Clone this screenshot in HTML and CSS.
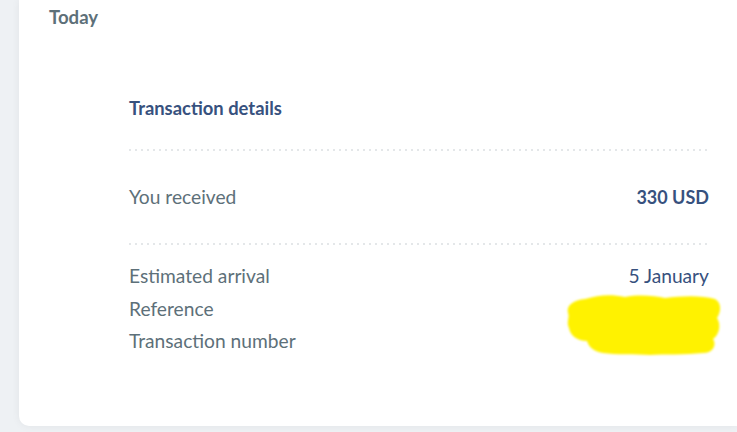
FILE: index.html
```html
<!DOCTYPE html>
<html lang="en">
<head>
<meta charset="utf-8">
<link rel="stylesheet" href="styles.css">
</head>
<body>
<div class="card">
  <div class="day">Today</div>
  <div class="details">
    <h2 class="title">Transaction details</h2>
    <div class="divider"></div>
    <div class="row row-main">
      <span class="label">You received</span>
      <span class="amount">330 USD</span>
    </div>
    <div class="divider"></div>
    <div class="list">
      <div class="row"><span class="label">Estimated arrival</span><span class="value">5 January</span></div>
      <div class="row"><span class="label">Reference</span><span class="value"></span></div>
      <div class="row"><span class="label">Transaction number</span><span class="value"></span></div>
      <svg class="scribble" width="158" height="64" viewBox="0 0 158 64" aria-hidden="true">
        <defs>
          <filter id="soft" x="-5%" y="-10%" width="110%" height="120%">
            <feGaussianBlur stdDeviation="0.9"/>
          </filter>
        </defs>
        <path filter="url(#soft)" fill="#fff200" d="M3 20 C1 12 9 7 20 6 C34 2 45 1 60 4 C75 1 90 3 100 5 C116 3 136 2 150 6 C157 10 156 19 152 25 C156 31 155 41 148 46 C152 52 148 60 138 60 C120 62 100 61 85 62 C70 61 50 62 38 60 C28 58 24 54 22 48 C12 48 5 42 4 35 C1 29 5 24 3 20 Z"/>
      </svg>
    </div>
  </div>
</div>
</body>
</html>
```

FILE: styles.css
```css
html, body {
  margin: 0;
  padding: 0;
}
body {
  width: 737px;
  height: 432px;
  overflow: hidden;
  background: #eef1f4;
  font-family: Lato, "Noto Sans", sans-serif;
}
.card {
  margin-left: 19px;
  height: 426px;
  background: #ffffff;
  border-radius: 0 0 0 10px;
  box-shadow: 0 0 8px rgba(0, 0, 0, 0.06);
  padding: 5px 28px 0 30px;
  box-sizing: border-box;
}
.day {
  font-size: 18.6px;
  line-height: 24px;
  font-weight: 700;
  color: #5d7079;
}
.details {
  margin-left: 80px;
  margin-top: 67px;
}
.title {
  margin: 0;
  font-size: 18.4px;
  line-height: 24px;
  font-weight: 700;
  color: #37517e;
  padding-bottom: 29px;
}
.divider {
  height: 2px;
  background-image: linear-gradient(to right, #e4e7e9 0 2px, transparent 2px 100%);
  background-size: 6px 2px;
  background-repeat: repeat-x;
}
.row {
  display: flex;
  justify-content: space-between;
  font-size: 19.2px;
  line-height: 24px;
  color: #5d7079;
}
.row-main {
  padding: 34px 0;
}
.amount {
  font-size: 18px;
  font-weight: 700;
  color: #37517e;
}
.value {
  color: #37517e;
}
.list {
  position: relative;
  padding-top: 19px;
  display: flex;
  flex-direction: column;
  gap: 8.5px;
}
.scribble {
  position: absolute;
  right: -14px;
  top: 48px;
}
```
